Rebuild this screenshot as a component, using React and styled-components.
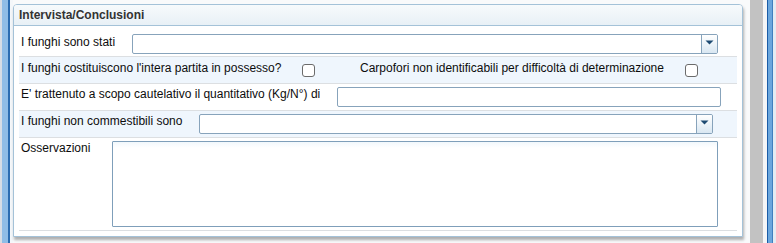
import styled, { createGlobalStyle } from 'styled-components'
import React from 'react'

const GlobalStyle = createGlobalStyle`
  html, body {
    margin: 0;
    padding: 0;
    background: #ffffff;
  }
  body {
    font-family: "Liberation Sans", Arial, sans-serif;
    font-size: 12px;
    color: #000;
  }
`

function App() {
  return (
    <Frame>
      <GlobalStyle />
      <LeftEdge />
      <Main>
        <Panel>
          <PanelHeader>Intervista/Conclusioni</PanelHeader>
          <PanelBody>
            <Row $h={29} $pt={7}>
              <Label $w={111}>I funghi sono stati</Label>
              <Combo $w={586} />
            </Row>
            <Row $alt $h={26} $pt={3}>
              <Label $w={281}>I funghi costituiscono l'intera partita in possesso?</Label>
              <Check $mt={4} />
              <Label $w={325} $ml={45}>
                Carpofori non identificabili per difficoltà di determinazione
              </Label>
              <Check $mt={4} />
            </Row>
            <Row $h={26} $pt={2}>
              <Label $w={316}>E' trattenuto a scopo cautelativo il quantitativo (Kg/N°) di</Label>
              <TextInput $w={384} $mt={1} />
            </Row>
            <Row $alt $h={26} $pt={2}>
              <Label $w={178}>I funghi non commestibili sono</Label>
              <Combo $w={514} $mt={1} />
            </Row>
            <Row $h={92} $pt={2}>
              <Label $w={91}>Osservazioni</Label>
              <TextArea $w={606} $mt={1} />
            </Row>
          </PanelBody>
        </Panel>
      </Main>
      <RightEdge />
    </Frame>
  )
}

const Combo = ({ $w, $mt }) => {
  return (
    <ComboBox $w={$w} $mt={$mt}>
      <ComboText />
      <Trigger>
        <svg width="9" height="5" viewBox="0 0 9 5">
          <path d="M0.5 0.5 L8.5 0.5 L4.5 4.5 Z" fill="#1d4a72" />
        </svg>
      </Trigger>
    </ComboBox>
  )
}

const Frame = styled.div`
  display: flex;
  width: 776px;
  height: 243px;
  overflow: hidden;
`

const LeftEdge = styled.div`
  flex: 0 0 13px;
  background: linear-gradient(
    to right,
    #d6dde5 0 2px,
    #8fbde6 2px 8px,
    #2a6cb0 8px 10px,
    #f4f7fa 10px 13px
  );
`

const RightEdge = styled.div`
  flex: 0 0 26px;
  background: linear-gradient(
    to right,
    #c2c2c2 0 13px,
    #f4f5f6 13px 17px,
    #1b5ca6 17px 18px,
    #6aa6dd 18px 22px,
    #3f7fbf 22px 23px,
    #e4ebf2 23px 26px
  );
`

const Main = styled.div`
  flex: 0 0 737px;
  padding-top: 4px;
  background: #f9fafb;
`

const Panel = styled.div`
  width: 730px;
  height: 233px;
  box-sizing: border-box;
  border: 1px solid #a4c2d8;
  border-radius: 4px 4px 0 0;
  background: #ffffff;
  box-shadow: 1px 3px 3px rgba(0, 0, 0, 0.3);
  display: flex;
  flex-direction: column;
`

const PanelHeader = styled.div`
  height: 20px;
  line-height: 20px;
  padding-left: 5px;
  font-weight: bold;
  font-size: 12px;
  color: #333333;
  border-bottom: 1px solid #a4c2d8;
  border-radius: 3px 3px 0 0;
  background: linear-gradient(to bottom, #f7fafc, #e8f0f6);
`

const PanelBody = styled.div`
  padding: 1px 5px 0 5px;
  display: flex;
  flex-direction: column;
`

const Row = styled.div`
  display: flex;
  align-items: flex-start;
  height: ${(p) => p.$h}px;
  box-sizing: content-box;
  padding: ${(p) => p.$pt}px 0 0 2px;
  height: ${(p) => p.$h - p.$pt}px;
  border-bottom: 1px solid #dcdfe2;
  background: ${(p) => (p.$alt ? '#eff6fd' : '#ffffff')};
`

const Label = styled.div`
  flex: 0 0 ${(p) => p.$w}px;
  margin-left: ${(p) => p.$ml || 0}px;
  line-height: 15px;
  margin-top: 1px;
  white-space: nowrap;
  color: #0d0d0d;
`

const ComboBox = styled.div`
  display: flex;
  width: ${(p) => p.$w}px;
  height: 20px;
  margin-top: ${(p) => p.$mt || 0}px;
  box-sizing: border-box;
  border: 1px solid #87a3bb;
  border-radius: 2px;
  background: #ffffff;
  overflow: hidden;
`

const ComboText = styled.div`
  flex: 1;
`

const Trigger = styled.div`
  flex: 0 0 16px;
  border-left: 1px solid #87a3bb;
  background: linear-gradient(to bottom, #ffffff, #d9e7f2);
  display: flex;
  justify-content: center;
  padding-top: 5px;
  box-sizing: border-box;
`

const TextInput = styled.div`
  width: ${(p) => p.$w}px;
  height: 20px;
  margin-top: ${(p) => p.$mt || 0}px;
  box-sizing: border-box;
  border: 1px solid #87a3bb;
  border-radius: 2px;
  background: #ffffff;
`

const TextArea = styled.div`
  width: ${(p) => p.$w}px;
  height: 86px;
  margin-top: ${(p) => p.$mt || 0}px;
  box-sizing: border-box;
  border: 1px solid #7f9fba;
  border-radius: 1px;
  background: linear-gradient(to bottom, #f2f8fc, #ffffff 6px);
`

const Check = styled.div`
  flex: 0 0 13px;
  width: 13px;
  height: 13px;
  margin-top: ${(p) => p.$mt || 0}px;
  box-sizing: border-box;
  border: 1px solid #6b6b6b;
  border-radius: 3px;
  background: #ffffff;
`

export default App
